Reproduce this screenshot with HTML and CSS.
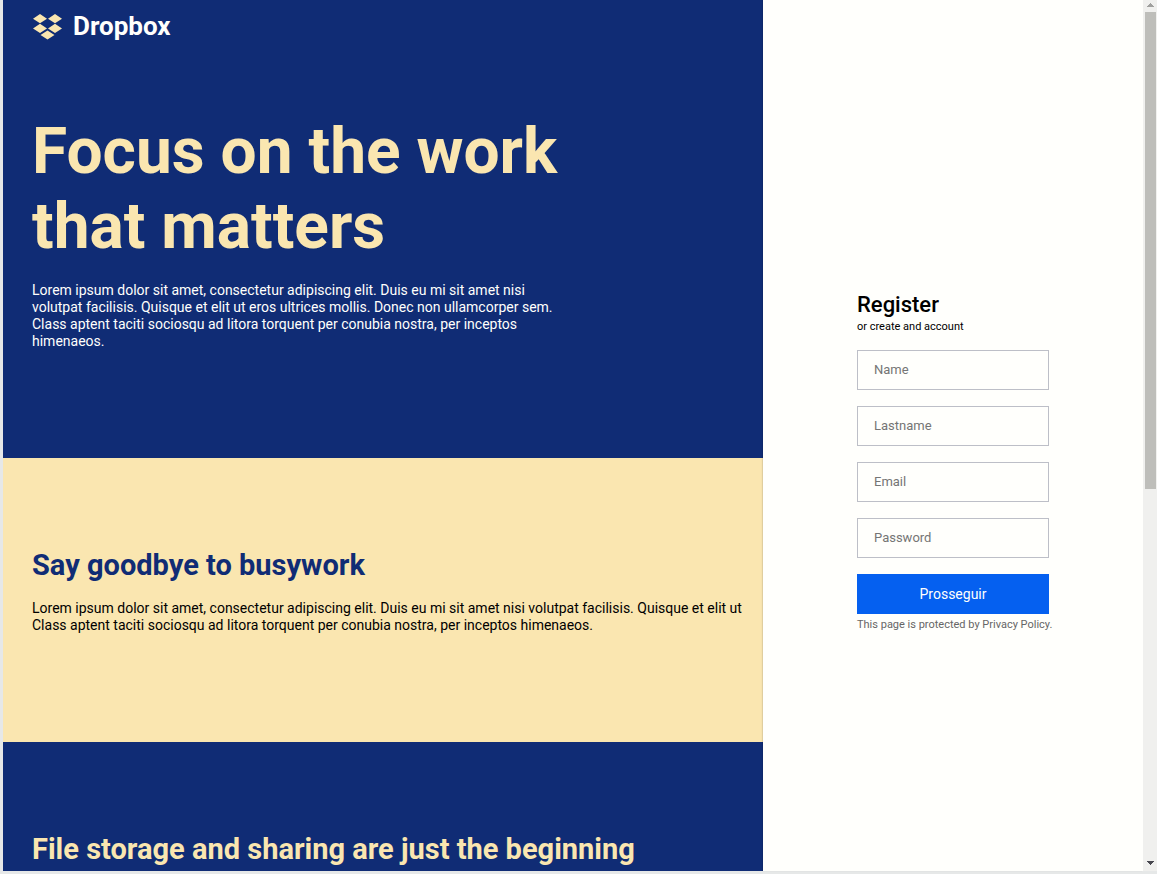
FILE: index.html
```html
<!DOCTYPE html>
<html lang="en">
<head>
<meta charset="utf-8">
<title>Dropbox</title>
<link rel="stylesheet" href="styles.css">
</head>
<body>
<div class="window">
  <main class="content">
    <section class="hero">
      <header class="brand">
        <svg class="brand-mark" viewBox="0 0 30 26" aria-hidden="true">
          <path d="M8 0 15 4.7 8 9.2 1 4.7ZM23 0 30 4.7 23 9.2 16 4.7ZM8 9.8 15 14.4 8 19 1 14.4ZM23 9.8 30 14.4 23 19 16 14.4ZM15.5 16.4 22.5 21 15.5 25.6 8.5 21Z"/>
        </svg>
        <span class="brand-name">Dropbox</span>
      </header>
      <div class="hero-text">
        <h1>Focus on the work<br>that matters</h1>
        <p>Lorem ipsum dolor sit amet, consectetur adipiscing elit. Duis eu mi sit amet nisi<br>volutpat facilisis. Quisque et elit ut eros ultrices mollis. Donec non ullamcorper sem.<br>Class aptent taciti sociosqu ad litora torquent per conubia nostra, per inceptos<br>himenaeos.</p>
      </div>
    </section>
    <section class="panel panel-light">
      <h2>Say goodbye to busywork</h2>
      <p>Lorem ipsum dolor sit amet, consectetur adipiscing elit. Duis eu mi sit amet nisi volutpat facilisis. Quisque et elit ut<br>Class aptent taciti sociosqu ad litora torquent per conubia nostra, per inceptos himenaeos.</p>
    </section>
    <section class="panel panel-dark">
      <h2>File storage and sharing are just the beginning</h2>
    </section>
  </main>
  <aside class="register">
    <form class="form">
      <div class="form-head">
        <h3>Register</h3>
        <p>or create and account</p>
      </div>
      <input type="text" placeholder="Name" aria-label="Name">
      <input type="text" placeholder="Lastname" aria-label="Lastname">
      <input type="email" placeholder="Email" aria-label="Email">
      <input type="password" placeholder="Password" aria-label="Password">
      <div class="form-end">
        <button type="submit">Prosseguir</button>
        <p>This page is protected by Privacy Policy.</p>
      </div>
    </form>
  </aside>
  <div class="scrollbar" aria-hidden="true">
    <svg class="arrow arrow-up" viewBox="0 0 7 4"><path d="M3 0h1v1h1v1h1v1h1v1H0V3h1V2h1V1h1Z"/></svg>
    <div class="track"><div class="thumb"></div></div>
    <svg class="arrow arrow-down" viewBox="0 0 7 4"><path d="M0 0h7v1H6v1H5v1H4v1H3V3H2V2H1V1H0Z"/></svg>
  </div>
</div>
</body>
</html>
```
FILE: styles.css
```css
* { box-sizing: border-box; margin: 0; }

body { font-family: Roboto, sans-serif; background: #e6e8e8; }

.window {
  display: flex;
  height: 100vh;
  border: solid #e6e8e8;
  border-width: 0 0 3px 3px;
  background: #fffffc;
}

.content { flex: 2; min-width: 0; overflow: hidden; }
.content p { font-size: 14px; line-height: 17px; white-space: nowrap; }

.hero { height: 458px; padding: 12px 29px; background: #102c75; color: #fffffc; }
.brand { display: flex; align-items: center; gap: 11px; }
.brand-mark { width: 30px; height: 26px; margin-top: 2px; fill: #fae6b0; }
.brand-name { font-size: 26px; font-weight: 700; line-height: 28px; }
.hero-text { padding-top: 74px; }
h1 { font-size: 64px; line-height: 75px; color: #fae6b0; margin-bottom: 18px; font-weight: 700; }

.panel { height: 284px; padding: 90px 29px; }
.panel h2 { font-size: 29px; line-height: 34px; margin-bottom: 18px; font-weight: 700; white-space: nowrap; }
.panel-light { background: #fae6b0; color: #000; }
.panel-light h2 { color: #102c75; }
.panel-dark { background: #102c75; color: #fae6b0; }

.register {
  flex: 1;
  display: flex;
  align-items: center;
  justify-content: center;
  padding-top: 52px;
  background: #fffffc;
  box-shadow: -1px 0 1px rgba(0, 0, 0, .1);
}
.form { display: flex; flex-direction: column; gap: 16px; width: 192px; }
.form h3 { font-size: 22px; line-height: 26px; font-weight: 500; }
.form p { font-size: 11px; line-height: 14px; white-space: nowrap; }
.form-head p { margin-top: 2px; }
.form input {
  width: 100%;
  height: 40px;
  padding: 0 16px;
  border: 1px solid #bdbfc7;
  background: #fffffc;
  font: 13px Roboto, sans-serif;
}
.form input::placeholder { color: #757575; }
.form button {
  width: 100%;
  height: 40px;
  border: 0;
  background: #0560f0;
  color: #fffffc;
  font: 14px Roboto, sans-serif;
}
.form-end p { margin-top: 4px; color: #666; }

.scrollbar {
  display: flex;
  flex-direction: column;
  align-items: center;
  width: 14px;
  padding: 3px 0 6px;
  background: #f0f0ee;
}
.arrow { width: 7px; height: 4px; shape-rendering: crispEdges; }
.arrow-up { fill: #a0a09e; }
.arrow-down { fill: #484850; }
.track { flex: 1; width: 11px; margin: 5px 0; }
.thumb { height: 56.5%; background: #bebeba; }
```
